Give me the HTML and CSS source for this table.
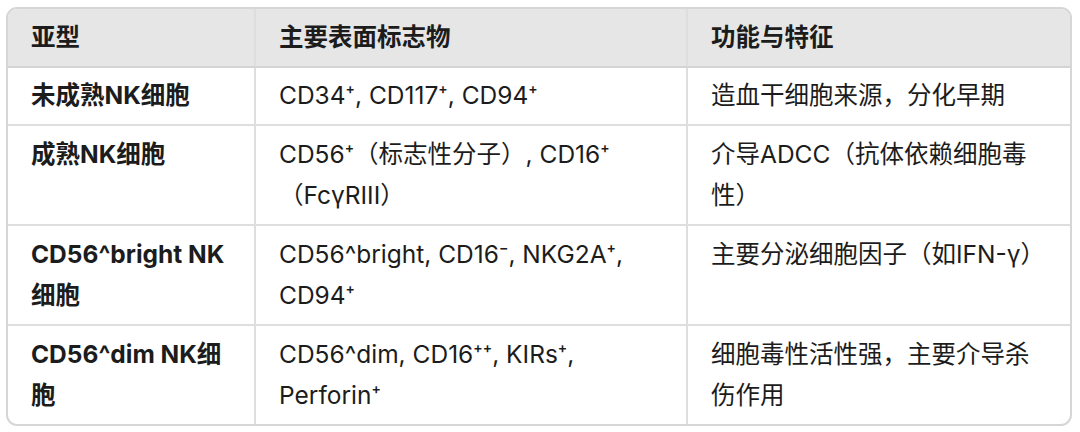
FILE: index.html
```html
<!DOCTYPE html>
<html lang="zh-CN">
<head>
<meta charset="utf-8">
<link rel="stylesheet" href="styles.css">
</head>
<body>
<div class="wrap" role="table">
  <div class="row head" role="row">
    <div class="cell" role="columnheader">亚型</div>
    <div class="cell" role="columnheader">主要表面标志物</div>
    <div class="cell" role="columnheader">功能与特征</div>
  </div>
  <div class="row one" role="row">
    <div class="cell b">未成熟NK细胞</div>
    <div class="cell">CD34<sup>+</sup>, CD117<sup>+</sup>, CD94<sup>+</sup></div>
    <div class="cell">造血干细胞来源，分化早期</div>
  </div>
  <div class="row two" role="row">
    <div class="cell b">成熟NK细胞</div>
    <div class="cell">CD56<sup>+</sup>（标志性分子）, CD16<sup>+</sup><br>（FcγRIII）</div>
    <div class="cell">介导ADCC（抗体依赖细胞毒<br>性）</div>
  </div>
  <div class="row two" role="row">
    <div class="cell b">CD56^bright NK<br>细胞</div>
    <div class="cell">CD56^bright, CD16<sup>−</sup>, NKG2A<sup>+</sup>,<br>CD94<sup>+</sup></div>
    <div class="cell">主要分泌细胞因子（如IFN-γ）</div>
  </div>
  <div class="row two" role="row">
    <div class="cell b">CD56^dim NK细<br>胞</div>
    <div class="cell">CD56^dim, CD16<sup>++</sup>, KIRs<sup>+</sup>,<br>Perforin<sup>+</sup></div>
    <div class="cell">细胞毒性活性强，主要介导杀<br>伤作用</div>
  </div>
</div>
</body>
</html>
```

FILE: styles.css
```css
html, body {
  margin: 0;
  padding: 0;
  background: #ffffff;
}
body {
  font-family: "Inter", "Liberation Sans", "Noto Sans CJK SC", sans-serif;
  color: #1c1c1c;
}
.wrap {
  margin: 7px 0 0 6px;
  width: 1066px;
  box-sizing: border-box;
  border: 2px solid #d6d6d6;
  border-radius: 11px;
  overflow: hidden;
}
.row {
  display: grid;
  grid-template-columns: 248px 432px 1fr;
  border-bottom: 2px solid #dedede;
}
.row:last-child { border-bottom: none; }
.cell {
  font-size: 24.5px;
  line-height: 41px;
  padding: 7px 22px 8px 23px;
  border-right: 2px solid #dedede;
  box-sizing: border-box;
}
.cell:last-child { border-right: none; }
.head {
  background: #e6e6e6;
  font-weight: 600;
  height: 57px;
  border-bottom-color: #d4d4d4;
}
.head .cell {
  display: flex;
  align-items: center;
  padding-top: 0;
  padding-bottom: 0;
}
.one { height: 56px; }
.two { height: 98px; }
.two .cell { padding-top: 8px; padding-bottom: 7px; }
.b { font-weight: 700; }
sup {
  font-size: 14px;
  font-weight: 600;
  line-height: 0;
  vertical-align: 10px;
}
```
